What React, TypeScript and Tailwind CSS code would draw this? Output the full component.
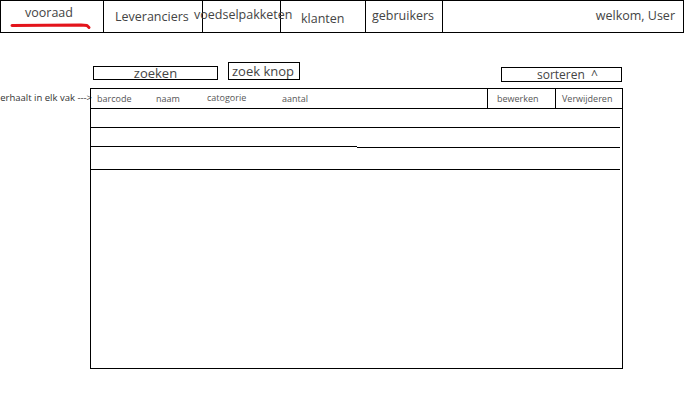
import React from 'react';

const navText = 'text-[12.5px] leading-4 text-[#444] whitespace-nowrap';

const App: React.FC = () => {
  return (
    <div className="w-[687px] h-[402px] bg-white overflow-hidden font-['Open_Sans',sans-serif]">
      {/* navigatie */}
      <div className="flex w-[684px] h-[33px] border border-black">
        <div className="w-[103px] h-full border-r border-black flex flex-col">
          <span className={`${navText} pl-[24px] pt-[4px]`}>vooraad</span>
          <svg width="90" height="8" viewBox="0 0 90 8" className="ml-[8px] mt-[1px]">
            <path d="M3 3.5 L 72 3 L 78 3.5 L 80 5.5" stroke="#e3141b" strokeWidth="3" fill="none" strokeLinecap="round" strokeLinejoin="round" />
          </svg>
        </div>
        <div className="w-[99px] h-full border-r border-black">
          <div className={`${navText} pl-[11px] pt-[8px]`}>Leveranciers</div>
        </div>
        <div className="w-[78px] h-full border-r border-black">
          <div className={`${navText} -ml-[9px] pt-[6px]`}>voedselpakketen</div>
        </div>
        <div className="w-[85px] h-full border-r border-black">
          <div className={`${navText} pl-[20px] pt-[10px]`}>klanten</div>
        </div>
        <div className="w-[77px] h-full border-r border-black">
          <div className={`${navText} pl-[6px] pt-[7px]`}>gebruikers</div>
        </div>
        <div className="flex-1 h-full flex justify-end">
          <div className={`${navText} pr-[8px] pt-[7px]`}>welkom, User</div>
        </div>
      </div>

      {/* zoek balk */}
      <div className="flex items-start h-[26px] mt-[29px] pl-[93px]">
        <div className="w-[125px] h-[14px] mt-[4px] border border-black flex items-center justify-center">
          <span className="text-[13px] leading-none text-[#444]">zoeken</span>
        </div>
        <div className="w-[72px] h-[18px] ml-[10px] border border-black flex items-center">
          <span className="text-[13px] leading-none text-[#444] pl-[3px]">zoek knop</span>
        </div>
        <div className="w-[121px] h-[15px] mt-[5px] ml-auto mr-[65px] border border-black flex items-center">
          <span className="text-[12px] leading-none text-[#444] pl-[35px] whitespace-nowrap">sorteren&nbsp;&nbsp;^</span>
        </div>
      </div>

      {/* tabel */}
      <div className="flex">
        <div className="w-[90px] flex justify-end pt-[4px]">
          <span className="text-[9.5px] leading-3 text-[#333] whitespace-nowrap -mr-[2px]">herhaalt in elk vak ---&gt;</span>
        </div>
        <div className="w-[533px] h-[281px] border border-black">
          <div className="flex h-[20px] border-b border-black text-[9px] text-[#555] leading-3">
            <div className="w-[65px] pl-[6px] flex items-center">barcode</div>
            <div className="w-[51px] flex items-center">naam</div>
            <div className="w-[75px] flex items-center pb-[2px]">catogorie</div>
            <div className="w-[205px] flex items-center">aantal</div>
            <div className="w-[68px] border-l border-black pl-[9px] flex items-center">bewerken</div>
            <div className="flex-1 border-l border-black pl-[6px] flex items-center">Verwijderen</div>
          </div>
          <div className="h-[19px] mr-[2px] border-b border-black" />
          <div className="flex items-start h-[20px] mr-[2px]">
            <div className="w-[266px] h-[19px] border-b border-black" />
            <div className="flex-1 h-[20px] border-b border-black" />
          </div>
          <div className="h-[22px] mr-[2px] border-b border-black" />
        </div>
      </div>
    </div>
  );
};

export default App;
